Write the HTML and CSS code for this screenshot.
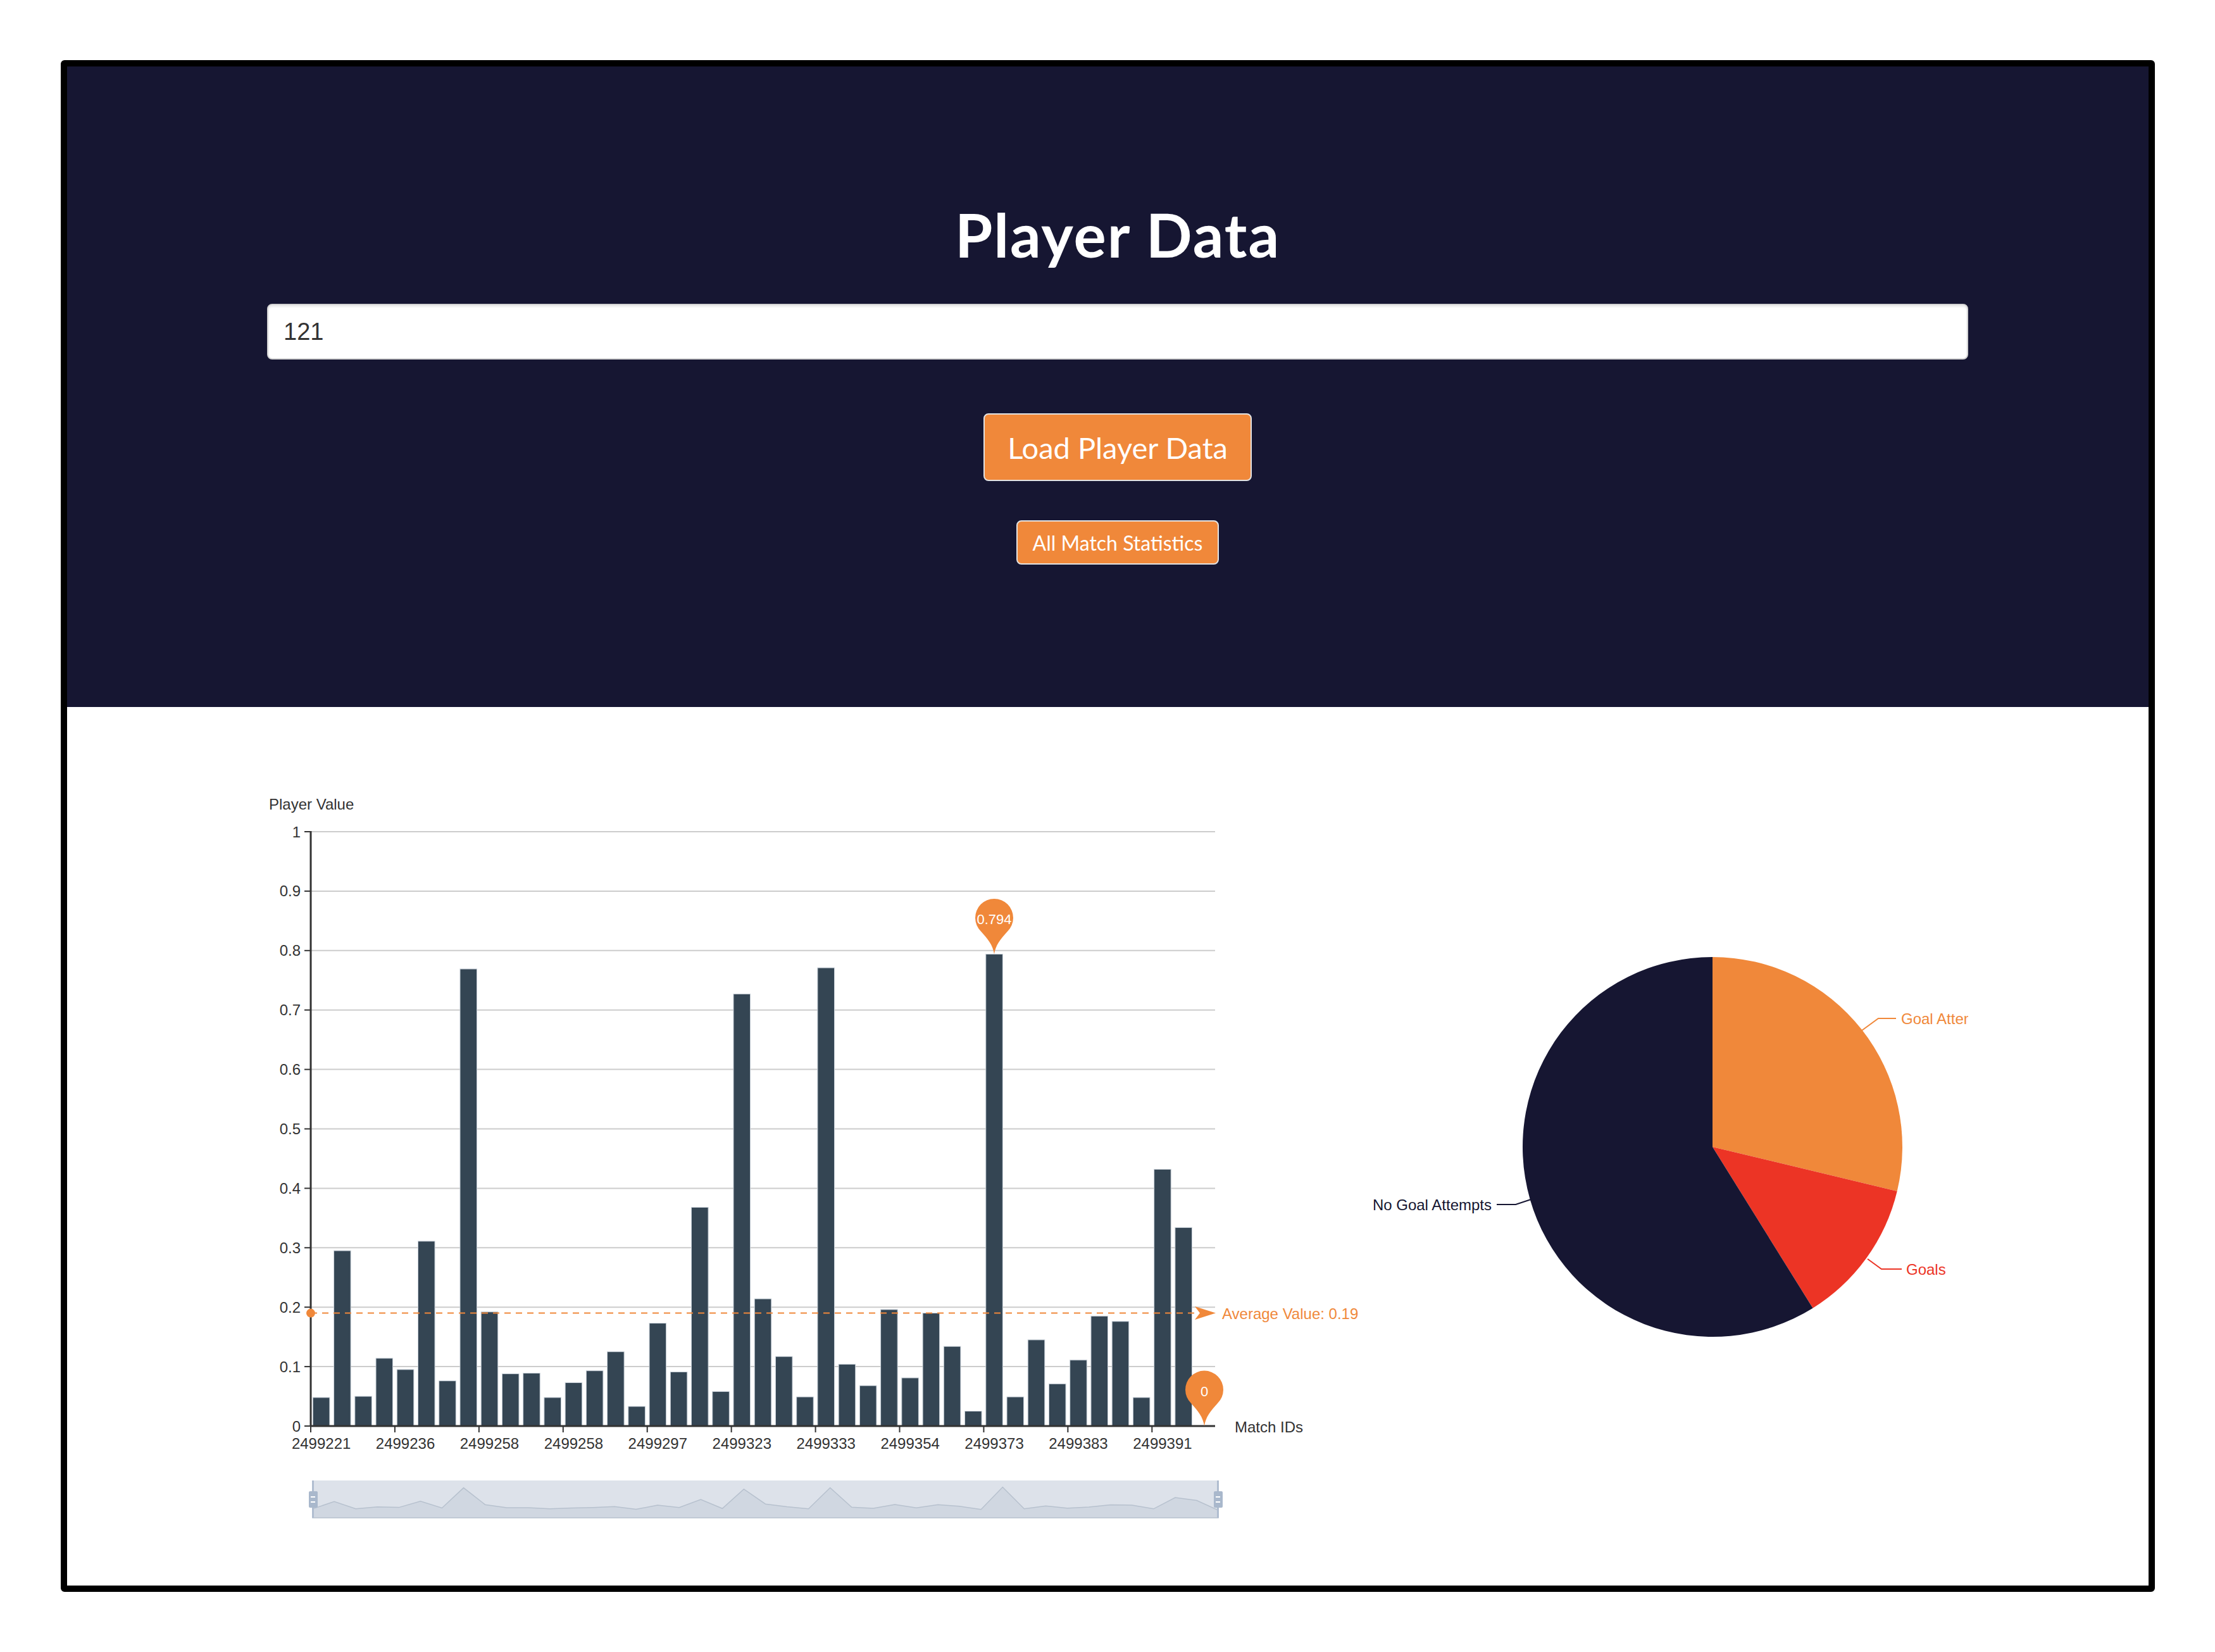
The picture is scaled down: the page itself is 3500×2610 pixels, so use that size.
FILE: index.html
```html
<!DOCTYPE html>
<html lang="en">
<head>
    <meta charset="UTF-8">
    <meta name="viewport" content="width=device-width, initial-scale=1.0">
    <title>Player Data</title>
    <link rel="stylesheet" href="styles.css">
</head>
<body>
    <div class="frame">
        <header class="hero">
            <div class="container">
                <h1 class="title">Player Data</h1>
                <input class="player-input" type="text" value="121">
                <div class="actions">
                    <button class="btn btn-load">Load Player Data</button>
                    <button class="btn btn-stats">All Match Statistics</button>
                </div>
            </div>
        </header>
        <main class="charts">
            <div class="container charts-row">
                <svg id="bar-chart" class="bar-chart" width="1740" height="1200" viewBox="0 0 1740 1200">
                    <text class="axis-name" x="3" y="50">Player Value</text>
                    <g id="grid"></g>
                    <g id="bars"></g>
                    <g id="axes"></g>
                    <!-- average line -->
                    <line class="avg-line" x1="69" y1="845.6" x2="1470" y2="845.6"></line>
                    <circle class="avg-dot" cx="69" cy="845.6" r="7"></circle>
                    <polygon class="avg-arrow" points="1466,835 1499,845.6 1466,856 1474,845.6"></polygon>
                    <text class="avg-label" x="1509" y="846">Average Value: 0.19</text>
                    <text class="axis-name x-name" x="1529" y="1025">Match IDs</text>
                    <!-- max / min pins -->
                    <g transform="translate(1149,278.4)">
                        <path class="pin" d="M0,0 C-2,-14 -10,-24 -21,-36 A30,30 0 1 1 21,-36 C10,-24 2,-14 0,0 Z"></path>
                        <text class="pin-label" x="0" y="-55">0.794</text>
                    </g>
                    <g transform="translate(1481,1024)">
                        <path class="pin" d="M0,0 C-2,-14 -10,-24 -21,-36 A30,30 0 1 1 21,-36 C10,-24 2,-14 0,0 Z"></path>
                        <text class="pin-label" x="0" y="-55">0</text>
                    </g>
                    <!-- zoom slider -->
                    <rect class="slider-bg" x="72" y="1110" width="1431" height="59"></rect>
                    <path id="slider-shadow" class="slider-shadow" d=""></path>
                    <rect class="slider-edge" x="71" y="1110" width="3" height="59"></rect>
                    <rect class="slider-edge" x="1501" y="1110" width="3" height="59"></rect>
                    <rect class="slider-handle" x="66" y="1127" width="14" height="26" rx="2"></rect>
                    <rect class="slider-handle" x="1496" y="1127" width="14" height="26" rx="2"></rect>
                    <line class="handle-mark" x1="69" y1="1136" x2="76" y2="1136"></line>
                    <line class="handle-mark" x1="69" y1="1144" x2="76" y2="1144"></line>
                    <line class="handle-mark" x1="1499" y1="1136" x2="1506" y2="1136"></line>
                    <line class="handle-mark" x1="1499" y1="1144" x2="1506" y2="1144"></line>
                </svg>
                <svg class="pie-chart" width="948" height="1200" viewBox="0 0 948 1200">
                    <path class="slice-attempts" d="M544,583 L544,283 A300,300 0 0 1 835.7,653 Z"></path>
                    <path class="slice-goals" d="M544,583 L835.7,653 A300,300 0 0 1 702.5,837.7 Z"></path>
                    <path class="slice-none" d="M544,583 L702.5,837.7 A300,300 0 1 1 544,283 Z"></path>

                    <polyline class="label-line line-attempts" points="780,399 806,380 834,380"></polyline>
                    <text class="pie-label label-attempts" x="842" y="380">Goal Attempts</text>

                    <polyline class="label-line line-goals" points="789,760 811,776 843,776"></polyline>
                    <text class="pie-label label-goals" x="850" y="776">Goals</text>

                    <polyline class="label-line line-none" points="257,666 233,674 203,674"></polyline>
                    <text class="pie-label label-none" x="195" y="674" text-anchor="end">No Goal Attempts</text>
                </svg>
            </div>
        </main>
    </div>
    <script src="script.js"></script>
</body>
</html>
```

FILE: styles.css
```css
*{
    margin:0px;
    padding:0px;
    box-sizing: border-box;
}
body{
    background-color: white;
    width:3500px;
}
.frame{
    margin: 95px 95px 0px 96px;
    height:2420px;
    border:10px solid black;
    border-radius:6px;
    overflow:hidden;
    background-color: white;
}
.container{
    width:2688px;
    margin-left:316px;
}
.hero{
    height:1012px;
    padding-top:205px;
    background-color: #161632;
}
.title{
    font-family: Lato, "Noto Sans", sans-serif;
    font-weight: 700;
    font-size:96px;
    line-height:120px;
    letter-spacing:2px;
    color:white;
    text-align:center;
}
.player-input{
    display:block;
    width:2688px;
    height:88px;
    margin-top:50px;
    padding-left:24px;
    border:2px solid #d4d4d4;
    border-radius:8px;
    box-shadow: inset 0 3px 3px rgba(0,0,0,0.08);
    background-color: white;
    font-family: "Liberation Sans", Arial, sans-serif;
    font-size:38px;
    color:#333;
}
.actions{
    display:flex;
    flex-direction: column;
    align-items: center;
}
.btn{
    display:flex;
    align-items: center;
    justify-content: center;
    background-color: #f0883a;
    color:white;
    border:2px solid #e2e2e2;
    border-radius:8px;
    font-family: Lato, "Noto Sans", sans-serif;
    font-weight:400;
}
.btn-load{
    width:424px;
    height:107px;
    margin-top:85px;
    font-size:47px;
}
.btn-stats{
    width:320px;
    height:70px;
    margin-top:62px;
    font-size:32px;
}
.charts{
    padding-top:112px;
}
.charts-row{
    display:flex;
}
.bar-chart{
    overflow: visible;
    flex: none;
}
.pie-chart{
    flex: none;
}
svg text{
    font-family: "Liberation Sans", Arial, sans-serif;
    font-size:24px;
}
.axis-name{
    fill:#333;
}
.x-name{
    dominant-baseline: central;
}
.grid-line{
    stroke:#ccc;
    stroke-width:2;
}
.axis-line{
    stroke:#333;
    stroke-width:3;
}
.tick{
    stroke:#333;
    stroke-width:2;
}
.y-label{
    fill:#333;
    text-anchor:end;
    dominant-baseline: central;
}
.x-label{
    fill:#333;
    text-anchor:middle;
}
.bar{
    fill:#344553;
    stroke:#c9d1d9;
    stroke-width:1;
}
.avg-line{
    stroke:#f0883a;
    stroke-width:2;
    stroke-dasharray: 10 8;
}
.avg-dot, .avg-arrow, .pin{
    fill:#f0883a;
}
.avg-label{
    fill:#f0883a;
    dominant-baseline: central;
}
.pin-label{
    fill:white;
    font-size:22px !important;
    text-anchor:middle;
    dominant-baseline: central;
}
.slider-bg{
    fill:#dde2ea;
}
.slider-shadow{
    fill:#d0d7e1;
    stroke:#b7c1ce;
    stroke-width:1.5;
}
.slider-edge{
    fill:#b0bdd0;
}
.slider-handle{
    fill:#a9b8cc;
}
.handle-mark{
    stroke:white;
    stroke-width:2;
}
.slice-attempts{
    fill:#f0883a;
}
.slice-goals{
    fill:#ec3425;
}
.slice-none{
    fill:#161632;
}
.label-line{
    fill:none;
    stroke-width:2;
}
.line-attempts{
    stroke:#f0883a;
}
.line-goals{
    stroke:#ec3425;
}
.line-none{
    stroke:#161632;
}
.pie-label{
    dominant-baseline: central;
}
.label-attempts{
    fill:#f0883a;
}
.label-goals{
    fill:#ec3425;
}
.label-none{
    fill:#161632;
}
```

FILE: script.js
```js
// player value per match, last match had no value
let values = [0.048,0.295,0.050,0.114,0.095,0.311,0.076,0.769,0.192,0.088,0.089,
    0.048,0.073,0.093,0.125,0.033,0.173,0.091,0.368,0.058,0.727,0.214,
    0.117,0.049,0.771,0.104,0.068,0.196,0.081,0.190,0.134,0.025,0.794,
    0.049,0.145,0.071,0.111,0.185,0.176,0.048,0.432,0.334,0];
let ids = ["2499221","2499236","2499258","2499258","2499297","2499323",
    "2499333","2499354","2499373","2499383","2499391"];

const NS = "http://www.w3.org/2000/svg";
const gLeft = 69, gRight = 1498, gZero = 1024, gTop = 85;
let step = (gRight - gLeft) / values.length;
let unit = gZero - gTop;

function make(name, attrs, parent, text){
    let e = document.createElementNS(NS, name);
    for(let k in attrs){
        e.setAttribute(k, attrs[k]);
    }
    if(text !== undefined){
        e.textContent = text;
    }
    parent.appendChild(e);
    return e;
}

let grid = document.getElementById("grid");
let bars = document.getElementById("bars");
let axes = document.getElementById("axes");

// horizontal grid + y labels
for(let k=0;k<=10;k++){
    let y = gZero - k*unit/10;
    if(k>0){
        make("line", {class:"grid-line", x1:gLeft, y1:y, x2:gRight, y2:y}, grid);
    }
    make("line", {class:"tick", x1:gLeft-10, y1:y, x2:gLeft, y2:y}, axes);
    let label = k==10 ? "1" : (k==0 ? "0" : "0."+k);
    make("text", {class:"y-label", x:gLeft-16, y:y}, axes, label);
}

// bars
for(let i=0;i<values.length;i++){
    let h = values[i]*unit;
    if(h<=0) continue;
    make("rect", {class:"bar", x:(gLeft + i*step + step*0.1).toFixed(2), y:(gZero-h).toFixed(2),
        width:(step*0.8).toFixed(2), height:h.toFixed(2)}, bars);
}

// axis lines
make("line", {class:"axis-line", x1:gLeft, y1:gTop-1, x2:gLeft, y2:gZero}, axes);
make("line", {class:"axis-line", x1:gLeft-1, y1:gZero, x2:gRight, y2:gZero}, axes);

// x ticks + labels every 4 matches
for(let j=0;j<ids.length;j++){
    let x = gLeft + j*4*step;
    make("line", {class:"tick", x1:x, y1:gZero, x2:x, y2:gZero+10}, axes);
    make("text", {class:"x-label", x:(x + step/2).toFixed(2), y:gZero+36}, axes, ids[j]);
}

// slider data shadow
let sx = 1431/(values.length-1);
let d = "M72,1169";
for(let i=0;i<values.length;i++){
    d += " L" + (72 + i*sx).toFixed(1) + "," + (1157 - values[i]*46).toFixed(1);
}
d += " L1503,1169 Z";
document.getElementById("slider-shadow").setAttribute("d", d);
```
